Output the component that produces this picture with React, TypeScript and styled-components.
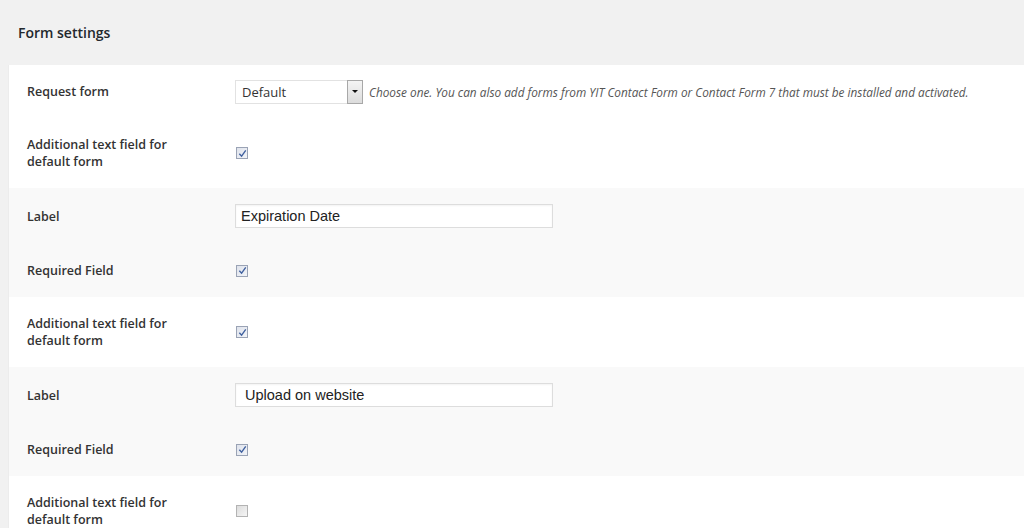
import { createGlobalStyle } from "styled-components";
import styled from "styled-components";

const GlobalStyle = createGlobalStyle`
    html, body {
        margin: 0;
        padding: 0;
        background: #f1f1f1;
        font-family: "Open Sans", "Liberation Sans", sans-serif;
        color: #333;
        overflow: hidden;
    }
`;

const Page = styled.div`
    padding-left: 8px;
    height: 528px;
`;

const Heading = styled.h2`
    margin: 0;
    padding: 0 0 0 10px;
    height: 65px;
    display: flex;
    align-items: center;
    font-size: 14px;
    font-weight: 600;
    color: #23282d;
    line-height: 1;
`;

const Panel = styled.div`
    background: #fff;
    border-left: 1px solid #ececec;
`;

const Section = styled.div<{ $shaded?: boolean }>`
    background: ${(p) => (p.$shaded ? "#f9f9f9" : "#fff")};
    padding-left: 18px;
`;

const Row = styled.div`
    display: grid;
    grid-template-columns: 208px 1fr;
    align-items: center;
    padding: 18px 0;
`;

const Label = styled.div`
    font-size: 12.5px;
    font-weight: 600;
    line-height: 17px;
    color: #333;
    width: 150px;
`;

const Control = styled.div<{ $tall?: boolean }>`
    display: flex;
    align-items: center;
    height: ${(p) => (p.$tall ? "20px" : "17px")};
    gap: 6px;
`;

const SelectBox = styled.div`
    box-sizing: border-box;
    width: 128px;
    height: 24px;
    flex-shrink: 0;
    display: flex;
    align-items: stretch;
    border: 1px solid #e2e2e2;
    background: #fff;
`;

const SelectText = styled.span`
    flex: 1;
    padding-left: 6px;
    display: flex;
    align-items: center;
    font-size: 13px;
    color: #333;
`;

const SelectArrow = styled.span`
    width: 14px;
    border: 1px solid #a8a8a8;
    margin: -1px -1px -1px 0;
    background: linear-gradient(#f4f4f4, #dcdcdc);
    display: flex;
    align-items: center;
    justify-content: center;
    &::after {
        content: "";
        border-left: 3px solid transparent;
        border-right: 3px solid transparent;
        border-top: 3px solid #111;
    }
`;

const Description = styled.span`
    font-size: 11.8px;
    font-style: italic;
    color: #555;
    white-space: nowrap;
`;

const TextInput = styled.input`
    box-sizing: border-box;
    width: 318px;
    height: 24px;
    border: 1px solid #ddd;
    box-shadow: inset 0 1px 2px rgba(0, 0, 0, 0.05);
    padding: 0 5px;
    font-family: "Liberation Sans", Arial, sans-serif;
    font-size: 14.5px;
    color: #222;
    background: #fff;
    outline: none;
`;

const Box = styled.span<{ $checked?: boolean }>`
    box-sizing: border-box;
    width: 12px;
    height: 12px;
    margin-left: 1px;
    border: 1px solid ${(p) => (p.$checked ? "#9aa3b5" : "#b3b3b3")};
    background: ${(p) =>
        p.$checked
            ? "linear-gradient(135deg, #dfe3ec, #f2f4f8)"
            : "linear-gradient(135deg, #dcdcdc, #f6f6f6)"};
    display: flex;
    align-items: center;
    justify-content: center;
    svg {
        width: 9px;
        height: 9px;
    }
`;

const Checkbox = ({ checked }: { checked?: boolean }) => (
    <Box $checked={checked}>
        {checked && (
            <svg viewBox="0 0 10 10">
                <path d="M1.5 5.2 L4 8 L8.6 1.6" fill="none" stroke="#3e5f9e" strokeWidth="1.5" />
            </svg>
        )}
    </Box>
);

const App = () => {
    return (
        <Page>
            <GlobalStyle />
            <Heading>Form settings</Heading>
            <Panel>
                <Section>
                    <Row>
                        <Label>Request form</Label>
                        <Control>
                            <SelectBox>
                                <SelectText>Default</SelectText>
                                <SelectArrow />
                            </SelectBox>
                            <Description>
                                Choose one. You can also add forms from YIT Contact Form or Contact Form 7 that must be installed and activated.
                            </Description>
                        </Control>
                    </Row>
                    <Row>
                        <Label>Additional text field for default form</Label>
                        <Control>
                            <Checkbox checked />
                        </Control>
                    </Row>
                </Section>
                <Section $shaded>
                    <Row>
                        <Label>Label</Label>
                        <Control $tall>
                            <TextInput defaultValue="Expiration Date" />
                        </Control>
                    </Row>
                    <Row>
                        <Label>Required Field</Label>
                        <Control>
                            <Checkbox checked />
                        </Control>
                    </Row>
                </Section>
                <Section>
                    <Row>
                        <Label>Additional text field for default form</Label>
                        <Control>
                            <Checkbox checked />
                        </Control>
                    </Row>
                </Section>
                <Section $shaded>
                    <Row>
                        <Label>Label</Label>
                        <Control $tall>
                            <TextInput defaultValue=" Upload on website" />
                        </Control>
                    </Row>
                    <Row>
                        <Label>Required Field</Label>
                        <Control>
                            <Checkbox checked />
                        </Control>
                    </Row>
                </Section>
                <Section>
                    <Row>
                        <Label>Additional text field for default form</Label>
                        <Control>
                            <Checkbox />
                        </Control>
                    </Row>
                </Section>
            </Panel>
        </Page>
    );
};

export default App;
